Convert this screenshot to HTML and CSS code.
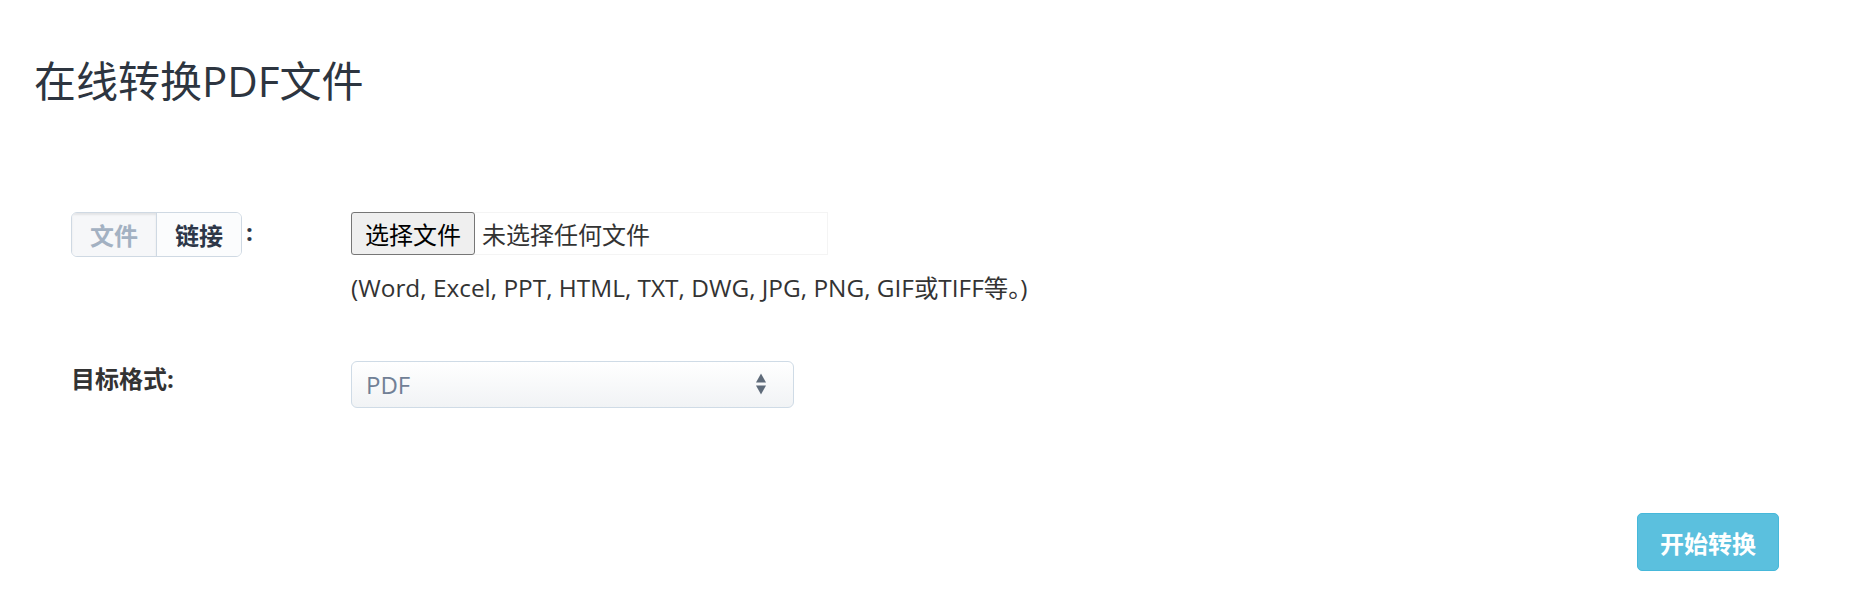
FILE: index.html
```html
<!DOCTYPE html>
<html lang="zh-CN">
<head>
    <meta charset="UTF-8">
    <meta name="viewport" content="width=device-width, initial-scale=1.0">
    <title>在线转换PDF文件</title>
    <link rel="stylesheet" href="styles.css">
</head>
<body>
    <h1 class="page-title">在线转换PDF文件</h1>

    <form class="convert-form" onsubmit="return false">
        <!-- 源文件 -->
        <div class="form-row">
            <div class="form-label">
                <div class="seg">
                    <span class="seg-item active">文件</span>
                    <span class="seg-item">链接</span>
                </div>
                <span class="colon">:</span>
            </div>
            <div class="form-field">
                <label class="file-box">
                    <span class="file-btn">选择文件</span>
                    <span class="file-name">未选择任何文件</span>
                </label>
                <p class="help">(Word, Excel, PPT, HTML, TXT, DWG, JPG, PNG, GIF或TIFF等。)</p>
            </div>
        </div>

        <!-- 目标格式 -->
        <div class="form-row row-target">
            <div class="form-label">
                <span class="label-text">目标格式:</span>
            </div>
            <div class="form-field">
                <div class="select-wrap">
                    <select class="select">
                        <option>PDF</option>
                    </select>
                    <svg class="select-arrow" width="10" height="22" viewBox="0 0 10 22">
                        <path d="M5 0.5 L10 9.5 H0 Z" fill="#5f6b7a"/>
                        <path d="M5 21.5 L10 12.5 H0 Z" fill="#5f6b7a"/>
                    </svg>
                </div>
            </div>
        </div>

        <div class="actions">
            <button class="btn-start" type="submit">开始转换</button>
        </div>
    </form>
</body>
</html>
```

FILE: styles.css
```css
body {
    margin: 0;
    padding: 0 34px;
    font-family: "Open Sans", "Noto Sans CJK SC", sans-serif;
    color: #333;
    background: #fff;
}
.page-title {
    margin: 56px 0 0;
    font-size: 42px;
    font-weight: 400;
    line-height: 50px;
    color: #2d3540;
}
.convert-form {
    margin-top: 106px;
    padding-left: 37px;
}
.form-row {
    display: grid;
    grid-template-columns: 280px auto;
}
.form-label {
    display: flex;
    align-items: flex-start;
}
.seg {
    display: flex;
    height: 43px;
    border: 1px solid #cfd9e3;
    border-radius: 6px;
    overflow: hidden;
}
.seg-item {
    width: 84px;
    display: flex;
    align-items: center;
    justify-content: center;
    font-size: 24px;
    font-weight: 700;
    color: #2d3748;
    background: #fbfcfd;
}
.seg-item.active {
    width: 84px;
    color: #a3b1c2;
    background: #f6f7f9;
    border-right: 1px solid #cfd9e3;
    box-shadow: inset 0 2px 2px rgba(0,0,0,0.08);
}
.colon {
    margin-left: 4px;
    font-size: 24px;
    font-weight: 700;
    line-height: 40px;
    color: #2d3748;
}
.file-box {
    display: flex;
    align-items: center;
    width: 477px;
    height: 43px;
    border: 1px solid #f4f4f4;
    box-sizing: border-box;
    cursor: pointer;
}
.file-btn {
    display: flex;
    align-items: center;
    justify-content: center;
    width: 124px;
    height: 43px;
    margin-left: -1px;
    box-sizing: border-box;
    border: 1px solid #767676;
    border-radius: 3px;
    background: #efefef;
    color: #000;
    font-size: 24px;
}
.file-name {
    margin-left: 7px;
    font-size: 24px;
    color: #333;
}
.help {
    margin: 16px 0 0;
    font-size: 24.4px;
    line-height: 34px;
    white-space: nowrap;
    color: #333;
}
.row-target {
    margin-top: 56px;
}
.label-text {
    font-size: 24px;
    font-weight: 700;
    line-height: 36px;
    color: #333;
}
.select-wrap {
    position: relative;
    width: 443px;
}
.select {
    appearance: none;
    -webkit-appearance: none;
    width: 100%;
    height: 47px;
    padding: 0 40px 0 14px;
    border: 1px solid #cfdbe6;
    border-radius: 6px;
    background: linear-gradient(#ffffff, #f1f3f5);
    font-family: "Open Sans", "Noto Sans CJK SC", sans-serif;
    font-size: 24px;
    color: #718096;
}
.select-arrow {
    position: absolute;
    right: 28px;
    top: 12px;
    pointer-events: none;
}
.actions {
    display: flex;
    justify-content: flex-end;
    margin-top: 105px;
    padding-right: 63px;
}
.btn-start {
    width: 142px;
    height: 58px;
    border: 1px solid #46b8da;
    border-radius: 5px;
    background: #5bc0de;
    color: #fff;
    font-family: "Open Sans", "Noto Sans CJK SC", sans-serif;
    font-size: 24px;
    font-weight: 700;
    cursor: pointer;
}
```
